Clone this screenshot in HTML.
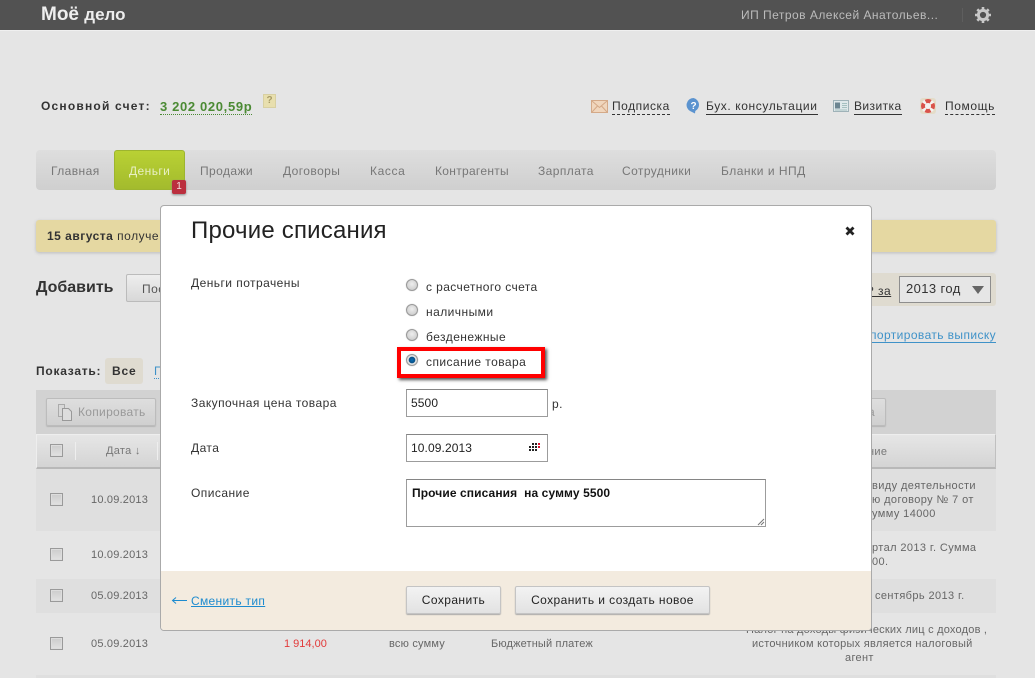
<!DOCTYPE html>
<html lang="ru">
<head>
<meta charset="utf-8">
<style>
html,body{margin:0;padding:0}
body{width:1035px;height:678px;overflow:hidden;background:#e5e5e5;position:relative;font-family:"Liberation Sans",sans-serif;font-size:12px;color:#666}
.a,.t{position:absolute}
.t{white-space:nowrap;line-height:14px;letter-spacing:.5px}
.box{box-sizing:border-box}
.nav{color:#777;font-size:12px;top:164px;letter-spacing:.42px}
.d{color:#666;font-size:11px;letter-spacing:.2px}
.cb{position:absolute;left:50px;width:13px;height:13px;box-sizing:border-box;border:1px solid #9a9a9a;background:linear-gradient(#ccc,#e2e2e2);box-shadow:inset 0 0 0 1px #ddd}
.lbl{color:#333;letter-spacing:.45px}
.radio{position:absolute;left:406px;width:12px;height:12px;box-sizing:border-box;border-radius:50%;border:1px solid #999;background:radial-gradient(circle at 50% 40%,#eee,#c4c4c4);box-shadow:0 0 1px #bbb}
.inp{position:absolute;box-sizing:border-box;background:#fff;border:1px solid #9c9c9c;border-top-color:#858585}
.btn{position:absolute;box-sizing:border-box;height:28px;top:586px;border:1px solid #c4c4c4;border-radius:2px;background:linear-gradient(#f3f3f3,#e2e2e2);box-shadow:0 1px 1px #aaa;color:#222;text-align:center;line-height:26px;letter-spacing:.42px;white-space:nowrap}
</style>
</head>
<body>
<!-- header -->
<div class="a" style="left:0;top:0;width:1035px;height:30px;background:#525252;border-bottom:1px solid #f0f0f0"></div>
<div class="t" style="left:41px;top:5px;font-size:19px;font-weight:bold;color:#eee;line-height:20px;letter-spacing:0">Моё <span style="font-size:17px">дело</span></div>
<div class="t" style="left:741px;top:8px;color:#bcbcbc;font-size:12px;letter-spacing:.48px">ИП Петров Алексей Анатольев...</div>
<div class="a" style="left:962px;top:8px;width:1px;height:14px;background:#5e5e5e"></div>
<svg class="a" style="left:975px;top:7px" width="16" height="16" viewBox="0 0 16 16"><circle cx="8" cy="8" r="4.600" fill="none" stroke="#c8c8c8" stroke-width="3"/><g stroke="#c8c8c8" stroke-width="2.600"><path d="M8 0v3M8 13v3M0 8h3M13 8h3M2.300 2.300l2.100 2.100M11.600 11.600l2.100 2.100M2.300 13.700l2.100-2.100M11.600 4.400l2.100-2.100"/></g></svg>

<!-- account row -->
<div class="t" style="left:41px;top:99px;font-weight:bold;color:#333;font-size:12px;letter-spacing:1.2px">Основной счет:</div>
<div class="t" style="left:160px;top:99px;font-weight:bold;color:#4b8a34;font-size:13px;letter-spacing:.65px;border-bottom:1px dotted #4b8a34;line-height:15px">3 202 020,59р</div>
<div class="a box" style="left:263px;top:94px;width:13px;height:14px;background:#e8dfae;border:1px solid #d8d0a2;color:#a89c68;font-size:10px;font-weight:bold;text-align:center;line-height:12px">?</div>

<svg class="a" style="left:591px;top:100px" width="17" height="13" viewBox="0 0 17 13"><rect x=".5" y=".5" width="16" height="12" fill="#f0d6bd" stroke="#d4a988"/><path d="M1 1l7.500 6.500L16 1M1 12l5.500-6M16 12l-5.500-6" fill="none" stroke="#d4a988"/></svg>
<div class="t" style="left:612px;top:99px;color:#333;letter-spacing:.55px;border-bottom:1px dashed #333;line-height:15px">Подписка</div>
<svg class="a" style="left:686px;top:98px" width="15" height="16" viewBox="0 0 15 16"><path d="M7.500 0a7 7 0 0 0-3 13.300L9 15.500l.3-2.500A7 7 0 0 0 7.500 0z" fill="#5b93cf"/><text x="7.500" y="11" font-size="10" font-weight="bold" fill="#fff" text-anchor="middle" font-family="Liberation Sans">?</text></svg>
<div class="t" style="left:706px;top:99px;color:#333;letter-spacing:.6px;border-bottom:1px solid #333;line-height:15px">Бух. консультации</div>
<svg class="a" style="left:833px;top:100px" width="16" height="13" viewBox="0 0 16 13"><rect x=".5" y=".5" width="15" height="11" fill="#dfe8ea" stroke="#9fb2b8"/><rect x="2" y="2.500" width="5" height="6" fill="#6c8591"/><path d="M9 3.500h5M9 5.500h5M9 7.500h5M2 10h12" stroke="#a5c0c0"/></svg>
<div class="t" style="left:854px;top:99px;color:#333;letter-spacing:.42px;border-bottom:1px solid #333;line-height:15px">Визитка</div>
<svg class="a" style="left:920px;top:98px" width="16" height="16" viewBox="0 0 16 16"><rect x="0" y="0" width="16" height="16" rx="3" fill="#e4dcc8"/><circle cx="8" cy="8" r="3.200" fill="#f4f3f0"/><circle cx="8" cy="8" r="5" fill="none" stroke="#f4f3f0" stroke-width="4"/><circle cx="8" cy="8" r="5" fill="none" stroke="#d9534a" stroke-width="4" stroke-dasharray="5.200 2.650" stroke-dashoffset="2.600"/></svg>
<div class="t" style="left:945px;top:99px;color:#333;letter-spacing:.6px;border-bottom:1px dashed #333;line-height:15px">Помощь</div>

<!-- nav -->
<div class="a" style="left:36px;top:150px;width:960px;height:40px;border-radius:4px;background:linear-gradient(#dedede,#cfcfcf)"></div>
<div class="a box" style="left:114px;top:150px;width:71px;height:40px;border-radius:3px;border:1px solid #9db52f;background:linear-gradient(#b9d134,#a3bb2d)"></div>
<div class="t nav" style="left:51px">Главная</div>
<div class="t nav" style="left:129px;color:#e8efc4">Деньги</div>
<div class="t nav" style="left:200px">Продажи</div>
<div class="t nav" style="left:283px">Договоры</div>
<div class="t nav" style="left:370px;letter-spacing:.6px">Касса</div>
<div class="t nav" style="left:435px;letter-spacing:.3px">Контрагенты</div>
<div class="t nav" style="left:538px">Зарплата</div>
<div class="t nav" style="left:622px">Сотрудники</div>
<div class="t nav" style="left:721px;letter-spacing:.5px">Бланки и НПД</div>
<div class="a" style="left:172px;top:180px;width:14px;height:14px;border-radius:2px;background:#bb2f3e;box-shadow:0 1px 2px #888;color:#f3e0e0;font-size:10px;text-align:center;line-height:14px">1</div>

<!-- notice -->
<div class="a" style="left:36px;top:220px;width:960px;height:32px;border-radius:3px;background:#e5d8a2;box-shadow:0 1px 3px #bbb"></div>
<div class="t" style="left:47px;top:229px;color:#333"><b>15 августа</b> получе</div>

<!-- add row -->
<div class="t" style="left:36px;top:278px;font-size:16px;font-weight:bold;color:#333;line-height:20px;letter-spacing:0">Добавить</div>
<div class="a box" style="left:126px;top:274px;width:50px;height:28px;border:1px solid #bbb;border-radius:2px;background:linear-gradient(#eee,#d8d8d8)"></div>
<div class="t" style="left:142px;top:282px;color:#555">Пос</div>
<div class="a" style="left:860px;top:273px;width:136px;height:33px;border-radius:3px;background:#dfdbd0"></div>
<div class="t" style="left:867px;top:284px;color:#333;text-decoration:underline">? за</div>
<div class="a box" style="left:899px;top:276px;width:92px;height:27px;border:1px solid #8e8e8e;background:#e6e6e6"></div>
<div class="t" style="left:906px;top:282px;color:#333;font-size:13px;letter-spacing:.4px">2013 год</div>
<div class="a" style="left:972px;top:286px;width:0;height:0;border-left:6px solid transparent;border-right:6px solid transparent;border-top:8px solid #666"></div>
<div class="t" style="left:870px;top:328px;color:#3f92c8;border-bottom:1px solid #3f92c8;line-height:14px;letter-spacing:.4px">портировать выписку</div>

<!-- show -->
<div class="t" style="left:36px;top:364px;font-weight:bold;color:#333;letter-spacing:.75px">Показать:</div>
<div class="a" style="left:105px;top:358px;width:38px;height:26px;border-radius:3px;background:#dfdbd0"></div>
<div class="t" style="left:112px;top:364px;font-weight:bold;color:#333;letter-spacing:.8px">Все</div>
<div class="t" style="left:154px;top:364px;color:#3f92c8;border-bottom:1px dotted #3f92c8">П</div>

<!-- table -->
<div class="a" style="left:36px;top:390px;width:960px;height:44px;background:#d2d2d2"></div>
<div class="a box" style="left:46px;top:398px;width:110px;height:28px;border:1px solid #bcbcbc;border-radius:2px;background:linear-gradient(#dedede,#d0d0d0);box-shadow:0 1px 1px #b5b5b5"></div>
<svg class="a" style="left:57px;top:403px" width="16" height="18" viewBox="0 0 16 18"><path d="M1.500 1.500h6v12h-6z" fill="#d8d8d8" stroke="#aaa"/><path d="M5.500 5.500h6l3 3v9h-9z" fill="#ddd" stroke="#999"/></svg>
<div class="t" style="left:78px;top:405px;color:#999;letter-spacing:.3px">Копировать</div>
<div class="a box" style="left:860px;top:398px;width:26px;height:28px;border:1px solid #bcbcbc;border-radius:2px;background:linear-gradient(#dedede,#d0d0d0);box-shadow:0 1px 1px #b5b5b5"></div>
<div class="t" style="left:868px;top:405px;color:#999">а</div>
<div class="a box" style="left:36px;top:434px;width:960px;height:35px;border:1px solid #eee;border-bottom:2px solid #b8b8b8;border-right-color:#c0c0c0;background:linear-gradient(#e6e6e6,#d4d4d4)"></div>
<div class="cb" style="top:444px"></div>
<div class="a" style="left:75px;top:442px;width:1px;height:18px;background:#eee"></div>
<div class="a" style="left:157px;top:442px;width:1px;height:18px;background:#eee"></div>
<div class="t" style="left:106px;top:444px;color:#777;font-size:11px;letter-spacing:.3px">Дата ↓</div>
<div class="t" style="left:868px;top:445px;color:#777;font-size:11px;letter-spacing:.3px">ние</div>

<div class="a" style="left:36px;top:469px;width:960px;height:62px;background:#dfdfdf"></div>
<div class="a" style="left:36px;top:579px;width:960px;height:34px;background:#dfdfdf"></div>
<div class="a" style="left:36px;top:675px;width:960px;height:3px;background:#dfdfdf"></div>

<div class="cb" style="top:493px"></div>
<div class="cb" style="top:548px"></div>
<div class="cb" style="top:589px"></div>
<div class="cb" style="top:637px"></div>
<div class="t d" style="left:91px;top:493px">10.09.2013</div>
<div class="t d" style="left:91px;top:548px">10.09.2013</div>
<div class="t d" style="left:91px;top:589px">05.09.2013</div>
<div class="t d" style="left:91px;top:637px">05.09.2013</div>

<div class="t d" style="left:872px;top:479px;letter-spacing:.4px">виду деятельности</div>
<div class="t d" style="left:872px;top:493px;letter-spacing:.4px">ю договору № 7 от</div>
<div class="t d" style="left:872px;top:507px;letter-spacing:.4px">умму 14000</div>
<div class="t d" style="left:872px;top:541px;letter-spacing:.4px">ртал 2013 г. Сумма</div>
<div class="t d" style="left:872px;top:555px;letter-spacing:.4px">00.</div>
<div class="t d" style="left:875px;top:589px;letter-spacing:.4px">сентябрь 2013 г.</div>

<div class="t d" style="left:284px;top:637px;color:#e23a3a;letter-spacing:0">1 914,00</div>
<div class="t d" style="left:389px;top:637px">всю сумму</div>
<div class="t d" style="left:491px;top:637px;letter-spacing:.15px">Бюджетный платеж</div>
<div class="t d" style="left:746px;top:623px;letter-spacing:.22px">Налог на доходы физических лиц с доходов ,</div>
<div class="t d" style="left:752px;top:637px;letter-spacing:.28px">источником которых является налоговый</div>
<div class="t d" style="left:845px;top:651px;letter-spacing:.32px">агент</div>

<!-- modal -->
<div class="a box" style="left:160px;top:205px;width:712px;height:426px;background:#fff;border:1px solid #aaa;border-radius:4px;overflow:hidden">
  <div class="a" style="left:0;top:365px;width:710px;height:59px;background:#f3ebdf"></div>
</div>
<div class="t" style="left:191px;top:217px;font-size:24px;line-height:28px;color:#222;letter-spacing:.2px">Прочие списания</div>
<svg class="a" style="left:845px;top:226px" width="10" height="10" viewBox="0 0 10 10"><path d="M1.500 1.500l7 7M8.500 1.500l-7 7" stroke="#222" stroke-width="2.800"/></svg>

<div class="t lbl" style="left:191px;top:276px">Деньги потрачены</div>
<div class="t lbl" style="left:191px;top:396px">Закупочная цена товара</div>
<div class="t lbl" style="left:191px;top:441px">Дата</div>
<div class="t lbl" style="left:191px;top:486px">Описание</div>

<div class="radio" style="top:279px"></div>
<div class="radio" style="top:304px"></div>
<div class="radio" style="top:329px"></div>
<div class="a box" style="left:397px;top:347px;width:148px;height:31px;border:4px solid #f00;box-shadow:2px 2px 3px #555"></div>
<div class="radio" style="top:354px;background:radial-gradient(circle,#0a6fb5 0,#0a4f85 3px,#e8e8e8 3.600px,#ccc 100%)"></div>
<div class="t lbl" style="left:426px;top:280px;letter-spacing:.4px">с расчетного счета</div>
<div class="t lbl" style="left:426px;top:305px">наличными</div>
<div class="t lbl" style="left:426px;top:330px">безденежные</div>
<div class="t lbl" style="left:426px;top:355px">списание товара</div>

<div class="inp" style="left:406px;top:389px;width:142px;height:28px"></div>
<div class="t" style="left:411px;top:396px;color:#222;letter-spacing:.1px">5500</div>
<div class="t lbl" style="left:552px;top:397px">р.</div>
<div class="inp" style="left:406px;top:434px;width:142px;height:28px"></div>
<div class="t" style="left:411px;top:441px;color:#222;letter-spacing:.1px">10.09.2013</div>
<svg class="a" style="left:528px;top:443px" width="12" height="8" viewBox="0 0 12 8" shape-rendering="crispEdges"><path d="M4 0h2v2H4zM7 0h2v2H7zM1 3h2v2H1zM4 3h2v2H4zM7 3h2v2H7zM1 6h2v2H1zM4 6h2v2H4zM7 6h2v2H7z" fill="#222"/><path d="M10 0h2v2h-2zM10 3h2v2h-2z" fill="#d8102c"/></svg>
<div class="inp" style="left:406px;top:479px;width:360px;height:48px"></div>
<div class="t" style="left:412px;top:486px;color:#111;font-size:12px;font-weight:bold;letter-spacing:.1px;white-space:pre">Прочие списания  на сумму 5500</div>
<svg class="a" style="left:757px;top:518px" width="8" height="8" viewBox="0 0 8 8"><path d="M1 7l6-6M4 7l3-3" stroke="#777"/></svg>

<svg class="a" style="left:171px;top:596px" width="17" height="9" viewBox="0 0 17 9"><path d="M16 4.500H2M5 1.500L1.500 4.500 5 7.500" fill="none" stroke="#1d8bcf"/></svg>
<div class="t" style="left:191px;top:594px;color:#1d8bcf;text-decoration:underline;letter-spacing:.32px">Сменить тип</div>
<div class="btn" style="left:406px;width:95px">Сохранить</div>
<div class="btn" style="left:515px;width:195px">Сохранить и создать новое</div>
</body>
</html>
